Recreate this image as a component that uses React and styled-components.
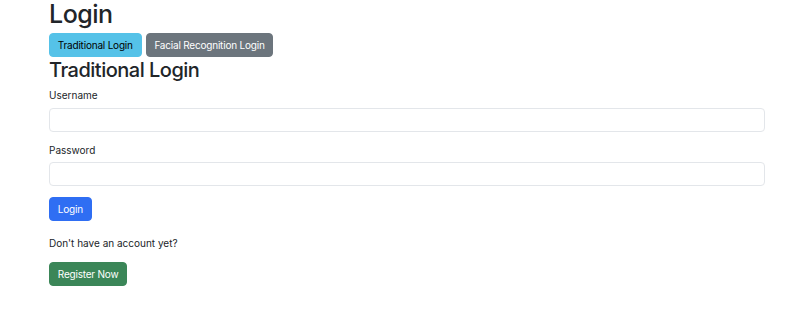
import React from "react";
import styled, { createGlobalStyle } from "styled-components";

const GlobalStyle = createGlobalStyle`
  html, body {
    margin: 0;
    padding: 0;
    background: #ffffff;
  }
  body {
    font-family: Inter, "Liberation Sans", Arial, sans-serif;
    font-size: 10px;
    line-height: 1.5;
    color: #212529;
  }
  * {
    box-sizing: border-box;
  }
`;

const Page = styled.div`
  padding: 0 41px 0 49px;
`;

const PageTitle = styled.h1`
  font-size: 25px;
  font-weight: 500;
  line-height: 28px;
  letter-spacing: -0.5px;
  margin: 0 0 5px;
`;

const ModeRow = styled.div`
  display: flex;
  gap: 4px;
  margin-bottom: 1px;
`;

const variants = {
  info: { bg: "#55c2e8", color: "#000000" },
  secondary: { bg: "#6c757d", color: "#ffffff" },
  primary: { bg: "#2f6ef3", color: "#ffffff" },
  success: { bg: "#3b8658", color: "#ffffff" },
};

const Button = styled.button`
  display: inline-flex;
  align-items: center;
  height: 24px;
  padding: 0 7.8px;
  font-family: inherit;
  font-size: 10px;
  line-height: 1;
  letter-spacing: -0.2px;
  border: 1px solid ${(p) => variants[p.$variant].bg};
  border-radius: 4px;
  background: ${(p) => variants[p.$variant].bg};
  color: ${(p) => variants[p.$variant].color};
  cursor: pointer;
`;

const SectionTitle = styled.h2`
  font-size: 20px;
  font-weight: 500;
  line-height: 25px;
  letter-spacing: -0.5px;
  margin: 0 0 5px;
`;

const Field = styled.div`
  margin-bottom: 11px;
`;

const Label = styled.label`
  display: block;
  font-size: 10px;
  line-height: 15.6px;
  margin-bottom: 4px;
`;

const Input = styled.input`
  display: block;
  width: 100%;
  height: 24px;
  padding: 0 7.8px;
  font-family: inherit;
  font-size: 10px;
  border: 1px solid #e3e6ea;
  border-radius: 4px;
  background: #ffffff;
  outline: none;
`;

const Note = styled.p`
  margin: 15px 0 10.5px;
  font-size: 10px;
  line-height: 15.6px;
`;

export default function App() {
  return (
    <>
      <GlobalStyle />
      <Page>
        <PageTitle>Login</PageTitle>
        <ModeRow>
          <Button $variant="info">Traditional Login</Button>
          <Button $variant="secondary">Facial Recognition Login</Button>
        </ModeRow>
        <SectionTitle>Traditional Login</SectionTitle>
        <form onSubmit={(e) => e.preventDefault()}>
          <Field>
            <Label htmlFor="username">Username</Label>
            <Input id="username" type="text" />
          </Field>
          <Field>
            <Label htmlFor="password">Password</Label>
            <Input id="password" type="password" />
          </Field>
          <Button $variant="primary" type="submit">
            Login
          </Button>
        </form>
        <Note>Don't have an account yet?</Note>
        <Button $variant="success">Register Now</Button>
      </Page>
    </>
  );
}
